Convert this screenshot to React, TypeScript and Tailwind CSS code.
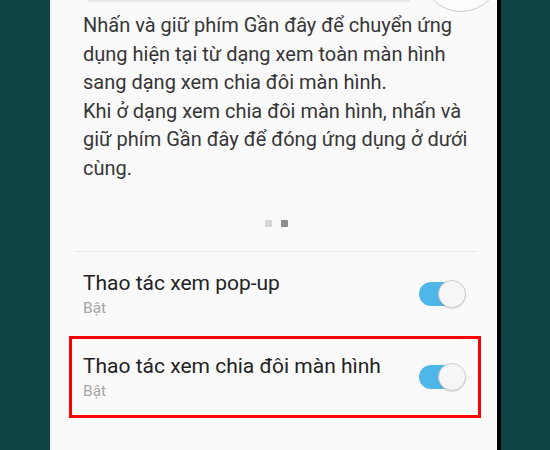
function Toggle() {
  return (
    <div className="relative w-[47px] h-[28px] shrink-0">
      <div className="absolute left-0 top-[2px] w-[42px] h-[24px] rounded-full bg-[#4fb7e7]" />
      <div className="absolute right-0 top-0 w-[28px] h-[28px] rounded-full bg-[#f6f6f6] border-[1.5px] border-[#cdcdcd] shadow-[0_1px_1px_rgba(0,0,0,0.12)]" />
    </div>
  );
}

function SettingRow({ title, highlighted }: { title: string; highlighted?: boolean }) {
  return (
    <div
      className={
        'ml-[17px] w-[412px] border-[3px] pl-[11px] pr-[12px] flex items-center justify-between ' +
        (highlighted ? 'border-[#ff0000] h-[82px]' : 'border-transparent h-[84px]')
      }
    >
      <div className="flex flex-col">
        <span className="text-[21px] leading-[26px] text-[#222222]">{title}</span>
        <span className="mt-[2px] text-[15.5px] leading-[20px] text-[#a5a5a5]">Bật</span>
      </div>
      <Toggle />
    </div>
  );
}

const lines = [
  'Nhấn và giữ phím Gần đây để chuyển ứng',
  'dụng hiện tại từ dạng xem toàn màn hình',
  'sang dạng xem chia đôi màn hình.',
  'Khi ở dạng xem chia đôi màn hình, nhấn và',
  'giữ phím Gần đây để đóng ứng dụng ở dưới',
  'cùng.',
];

export default function App() {
  return (
    <div className="w-[550px] h-[450px] flex bg-[#0f4446] overflow-hidden" style={{ fontFamily: 'Roboto, "Noto Sans", sans-serif' }}>
      <div className="w-[50px] shrink-0" />

      <div className="relative w-[447px] shrink-0 bg-[#fafafa] border-l-2 border-[#f0f0f0] overflow-hidden flex flex-col">
        {/* top card edge + round button peeking in */}
        <div className="ml-[36px] w-[322px] h-[2px] bg-[#e6e6e6]" />
        <div className="absolute left-[369px] top-[-68px] w-[80px] h-[80px] rounded-full bg-[#fdfdfd] border-[1.5px] border-[#cbcbcb]" />

        <div className="mt-[9px] pl-[31px] text-[20px] leading-[28.6px] text-[#363636] whitespace-nowrap">
          {lines.map((l) => (
            <div key={l}>{l}</div>
          ))}
        </div>

        <div className="mt-[37px] flex justify-center gap-[9px] pl-[4px]">
          <div className="w-[7px] h-[7px] rounded-[1px] bg-[#d6d6d6]" />
          <div className="w-[7px] h-[7px] rounded-[1px] bg-[#8e8e8e]" />
        </div>

        <div className="mt-[24px] ml-[23px] w-[402px] h-px bg-[#ebebeb]" />

        <SettingRow title="Thao tác xem pop-up" />
        <SettingRow title="Thao tác xem chia đôi màn hình" highlighted />
      </div>

      <div className="w-[4px] shrink-0 bg-black" />
    </div>
  );
}
